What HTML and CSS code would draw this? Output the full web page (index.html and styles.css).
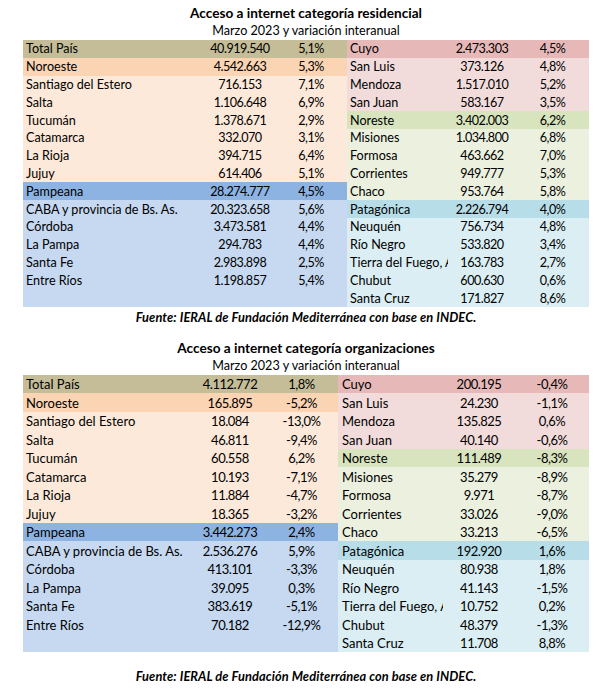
FILE: index.html
```html
<!DOCTYPE html>
<html lang="es">
<head>
<meta charset="utf-8">
<title>Acceso a internet</title>
<link rel="stylesheet" href="styles.css">
</head>
<body>
<div class="page">
  <section class="report r1">
    <h1 class="title">Acceso a internet categoría residencial</h1>
    <p class="subtitle">Marzo 2023 y variación interanual</p>
    <div class="table">
      <div class="block left">
        <div class="row total"><span class="name">Total País</span><span class="num">40.919.540</span><span class="pct">5,1%</span></div>
        <div class="row noroeste-h"><span class="name">Noroeste</span><span class="num">4.542.663</span><span class="pct">5,3%</span></div>
        <div class="row noroeste"><span class="name">Santiago del Estero</span><span class="num">716.153</span><span class="pct">7,1%</span></div>
        <div class="row noroeste"><span class="name">Salta</span><span class="num">1.106.648</span><span class="pct">6,9%</span></div>
        <div class="row noroeste"><span class="name">Tucumán</span><span class="num">1.378.671</span><span class="pct">2,9%</span></div>
        <div class="row noroeste"><span class="name">Catamarca</span><span class="num">332.070</span><span class="pct">3,1%</span></div>
        <div class="row noroeste"><span class="name">La Rioja</span><span class="num">394.715</span><span class="pct">6,4%</span></div>
        <div class="row noroeste"><span class="name">Jujuy</span><span class="num">614.406</span><span class="pct">5,1%</span></div>
        <div class="row pampeana-h"><span class="name">Pampeana</span><span class="num">28.274.777</span><span class="pct">4,5%</span></div>
        <div class="row pampeana"><span class="name">CABA y provincia de Bs. As.</span><span class="num">20.323.658</span><span class="pct">5,6%</span></div>
        <div class="row pampeana"><span class="name">Córdoba</span><span class="num">3.473.581</span><span class="pct">4,4%</span></div>
        <div class="row pampeana"><span class="name">La Pampa</span><span class="num">294.783</span><span class="pct">4,4%</span></div>
        <div class="row pampeana"><span class="name">Santa Fe</span><span class="num">2.983.898</span><span class="pct">2,5%</span></div>
        <div class="row pampeana"><span class="name">Entre Ríos</span><span class="num">1.198.857</span><span class="pct">5,4%</span></div>
        <div class="row pampeana"><span class="name"></span><span class="num"></span><span class="pct"></span></div>
      </div>
      <div class="block right">
        <div class="row cuyo-h"><span class="name">Cuyo</span><span class="num">2.473.303</span><span class="pct">4,5%</span></div>
        <div class="row cuyo"><span class="name">San Luis</span><span class="num">373.126</span><span class="pct">4,8%</span></div>
        <div class="row cuyo"><span class="name">Mendoza</span><span class="num">1.517.010</span><span class="pct">5,2%</span></div>
        <div class="row cuyo"><span class="name">San Juan</span><span class="num">583.167</span><span class="pct">3,5%</span></div>
        <div class="row noreste-h"><span class="name">Noreste</span><span class="num">3.402.003</span><span class="pct">6,2%</span></div>
        <div class="row noreste"><span class="name">Misiones</span><span class="num">1.034.800</span><span class="pct">6,8%</span></div>
        <div class="row noreste"><span class="name">Formosa</span><span class="num">463.662</span><span class="pct">7,0%</span></div>
        <div class="row noreste"><span class="name">Corrientes</span><span class="num">949.777</span><span class="pct">5,3%</span></div>
        <div class="row noreste"><span class="name">Chaco</span><span class="num">953.764</span><span class="pct">5,8%</span></div>
        <div class="row patagonica-h"><span class="name">Patagónica</span><span class="num">2.226.794</span><span class="pct">4,0%</span></div>
        <div class="row patagonica"><span class="name">Neuquén</span><span class="num">756.734</span><span class="pct">4,8%</span></div>
        <div class="row patagonica"><span class="name">Río Negro</span><span class="num">533.820</span><span class="pct">3,4%</span></div>
        <div class="row patagonica"><span class="name">Tierra del Fuego, Antártida e Islas del Atlántico Sur</span><span class="num">163.783</span><span class="pct">2,7%</span></div>
        <div class="row patagonica"><span class="name">Chubut</span><span class="num">600.630</span><span class="pct">0,6%</span></div>
        <div class="row patagonica"><span class="name">Santa Cruz</span><span class="num">171.827</span><span class="pct">8,6%</span></div>
      </div>
    </div>
    <p class="source">Fuente: IERAL de Fundación Mediterránea con base en INDEC.</p>
  </section>

  <section class="report r2">
    <h1 class="title">Acceso a internet categoría organizaciones</h1>
    <p class="subtitle">Marzo 2023 y variación interanual</p>
    <div class="table">
      <div class="block left">
        <div class="row total"><span class="name">Total País</span><span class="num">4.112.772</span><span class="pct">1,8%</span></div>
        <div class="row noroeste-h"><span class="name">Noroeste</span><span class="num">165.895</span><span class="pct">-5,2%</span></div>
        <div class="row noroeste"><span class="name">Santiago del Estero</span><span class="num">18.084</span><span class="pct">-13,0%</span></div>
        <div class="row noroeste"><span class="name">Salta</span><span class="num">46.811</span><span class="pct">-9,4%</span></div>
        <div class="row noroeste"><span class="name">Tucumán</span><span class="num">60.558</span><span class="pct">6,2%</span></div>
        <div class="row noroeste"><span class="name">Catamarca</span><span class="num">10.193</span><span class="pct">-7,1%</span></div>
        <div class="row noroeste"><span class="name">La Rioja</span><span class="num">11.884</span><span class="pct">-4,7%</span></div>
        <div class="row noroeste"><span class="name">Jujuy</span><span class="num">18.365</span><span class="pct">-3,2%</span></div>
        <div class="row pampeana-h"><span class="name">Pampeana</span><span class="num">3.442.273</span><span class="pct">2,4%</span></div>
        <div class="row pampeana"><span class="name">CABA y provincia de Bs. As.</span><span class="num">2.536.276</span><span class="pct">5,9%</span></div>
        <div class="row pampeana"><span class="name">Córdoba</span><span class="num">413.101</span><span class="pct">-3,3%</span></div>
        <div class="row pampeana"><span class="name">La Pampa</span><span class="num">39.095</span><span class="pct">0,3%</span></div>
        <div class="row pampeana"><span class="name">Santa Fe</span><span class="num">383.619</span><span class="pct">-5,1%</span></div>
        <div class="row pampeana"><span class="name">Entre Ríos</span><span class="num">70.182</span><span class="pct">-12,9%</span></div>
        <div class="row pampeana"><span class="name"></span><span class="num"></span><span class="pct"></span></div>
      </div>
      <div class="block right">
        <div class="row cuyo-h"><span class="name">Cuyo</span><span class="num">200.195</span><span class="pct">-0,4%</span></div>
        <div class="row cuyo"><span class="name">San Luis</span><span class="num">24.230</span><span class="pct">-1,1%</span></div>
        <div class="row cuyo"><span class="name">Mendoza</span><span class="num">135.825</span><span class="pct">0,6%</span></div>
        <div class="row cuyo"><span class="name">San Juan</span><span class="num">40.140</span><span class="pct">-0,6%</span></div>
        <div class="row noreste-h"><span class="name">Noreste</span><span class="num">111.489</span><span class="pct">-8,3%</span></div>
        <div class="row noreste"><span class="name">Misiones</span><span class="num">35.279</span><span class="pct">-8,9%</span></div>
        <div class="row noreste"><span class="name">Formosa</span><span class="num">9.971</span><span class="pct">-8,7%</span></div>
        <div class="row noreste"><span class="name">Corrientes</span><span class="num">33.026</span><span class="pct">-9,0%</span></div>
        <div class="row noreste"><span class="name">Chaco</span><span class="num">33.213</span><span class="pct">-6,5%</span></div>
        <div class="row patagonica-h"><span class="name">Patagónica</span><span class="num">192.920</span><span class="pct">1,6%</span></div>
        <div class="row patagonica"><span class="name">Neuquén</span><span class="num">80.938</span><span class="pct">1,8%</span></div>
        <div class="row patagonica"><span class="name">Río Negro</span><span class="num">41.143</span><span class="pct">-1,5%</span></div>
        <div class="row patagonica"><span class="name">Tierra del Fuego, Antártida e Islas del Atlántico Sur</span><span class="num">10.752</span><span class="pct">0,2%</span></div>
        <div class="row patagonica"><span class="name">Chubut</span><span class="num">48.379</span><span class="pct">-1,3%</span></div>
        <div class="row patagonica"><span class="name">Santa Cruz</span><span class="num">11.708</span><span class="pct">8,8%</span></div>
      </div>
    </div>
    <p class="source">Fuente: IERAL de Fundación Mediterránea con base en INDEC.</p>
  </section>
</div>
</body>
</html>
```

FILE: styles.css
```css
* { box-sizing: border-box; }
html, body { margin: 0; padding: 0; background: #ffffff; }
body {
  font-family: Lato, "Open Sans", "Liberation Sans", sans-serif;
  color: #000000;
  width: 610px;
  height: 690px;
  overflow: hidden;
}
.page { display: flex; flex-direction: column; }
.report { display: flex; flex-direction: column; }
.title, .subtitle, .source {
  margin: 0;
  text-align: center;
  line-height: 18px;
  height: 18px;
  padding-left: 2px;
}
.title { font-weight: 700; font-size: 13.6px; }
.subtitle { font-weight: 400; font-size: 12.6px; }
.source { font-weight: 700; font-style: italic; font-size: 12.8px; letter-spacing: 0.1px; }

.r1 { padding-top: 4px; }
.r1 .source { margin-top: 1px; }
.r2 { padding-top: 13px; }
.r2 .source { margin-top: 15px; }

.table { display: flex; margin-left: 23px; }
.block { display: flex; flex-direction: column; }
.row { display: grid; align-items: center; white-space: nowrap; }
.row span { overflow: hidden; }
.name { padding-left: 3px; }
.num, .pct { text-align: center; letter-spacing: -0.5px; }

.r1 .row { height: 17.8px; font-size: 12.6px; }
.r1 .left .row { grid-template-columns: 182px 70px 72px; }
.r1 .right .row { grid-template-columns: 101px 68px 73px; }
.r2 .row { height: 18.5px; font-size: 13px; }
.r2 .left .row { grid-template-columns: 172px 70px 73px; }
.r2 .right .row { grid-template-columns: 105px 72px 74px; }
.r2 .right .name { padding-left: 4px; }

.total { background: #c4bd97; }
.noroeste-h { background: #fbd4b4; }
.noroeste { background: #fde9d9; }
.pampeana-h { background: #8db3e2; }
.pampeana { background: #c6d9f1; }
.cuyo-h { background: #e6b9b8; }
.cuyo { background: #f2dcdb; }
.noreste-h { background: #d7e4bd; }
.noreste { background: #ebf1de; }
.patagonica-h { background: #b7dee8; }
.patagonica { background: #daeef3; }
```
